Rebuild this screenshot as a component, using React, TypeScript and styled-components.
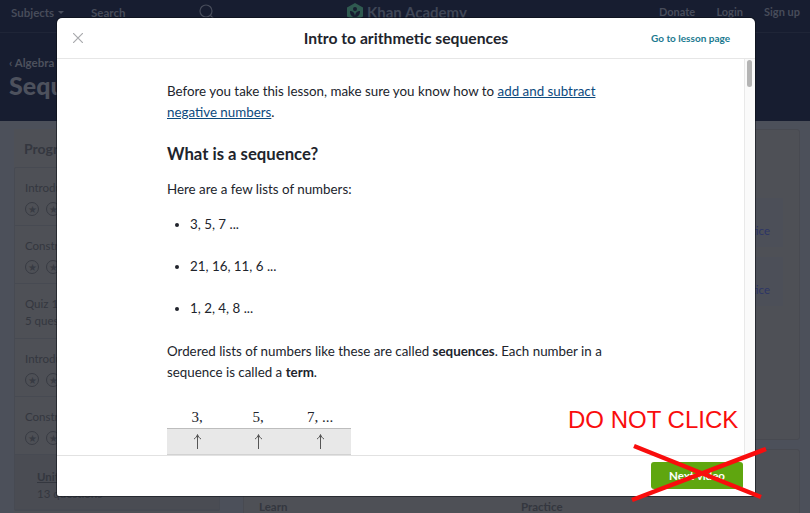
import React from 'react';
import styled, { createGlobalStyle } from 'styled-components';

const GlobalStyle = createGlobalStyle`
  html, body {
    margin: 0;
    padding: 0;
    width: 810px;
    height: 513px;
    overflow: hidden;
    background: #4c505a;
    font-family: Lato, "Open Sans", sans-serif;
  }
  * {
    box-sizing: border-box;
  }
`;

const Page = styled.div`
  position: relative;
  width: 810px;
  height: 513px;
  overflow: hidden;
  background: #4c505a;
`;

const TopBar = styled.div`
  height: 33px;
  background: #171d30;
  border-bottom: 1px solid #1f2537;
  display: flex;
  align-items: flex-start;
  padding: 4px 10px 0 11px;
  font-size: 11.5px;
  font-weight: 700;
  color: #474c5a;
`;

const BarLeft = styled.div`
  width: 336px;
  display: flex;
  align-items: center;
`;

const SubjectsMenu = styled.div`
  width: 80px;
  display: flex;
  align-items: center;
  gap: 4px;
`;

const Caret = styled.span`
  width: 0;
  height: 0;
  border-left: 3px solid transparent;
  border-right: 3px solid transparent;
  border-top: 3px solid #474c5a;
`;

const SearchBox = styled.div`
  width: 124px;
  display: flex;
  justify-content: space-between;
  align-items: center;
`;

const Logo = styled.div`
  display: flex;
  align-items: center;
  gap: 4px;
  width: 312px;
  font-size: 15px;
  margin-top: -1px;
  color: #3f4656;
`;

const BarLinks = styled.div`
  flex: 1;
  display: flex;
  justify-content: space-between;
  font-size: 11px;
  line-height: 16px;
`;

const Hero = styled.div`
  height: 88px;
  background: #171d30;
  padding: 23px 0 0 9px;
  color: #4d515d;
  font-weight: 700;
`;

const Crumb = styled.div`
  font-size: 11.5px;
  line-height: 14px;
`;

const HeroTitle = styled.div`
  font-size: 25px;
  font-weight: 900;
  line-height: 30px;
`;

const Body = styled.div`
  display: flex;
  padding: 8px 10px 0 14px;
  gap: 23px;
`;

const Sidebar = styled.div`
  width: 206px;
  flex-shrink: 0;
  padding-top: 10px;
  background: #4e5056;
`;

const SideTitle = styled.div`
  font-size: 14px;
  font-weight: 700;
  color: #34373f;
  padding-left: 10px;
  line-height: 20px;
  margin-bottom: 8px;
`;

const SideList = styled.div`
  border: 1px solid #474a52;
  border-radius: 2px;
`;

const SideRow = styled.div<{ $tall?: boolean; $shaded?: boolean }>`
  height: ${(p) => (p.$tall ? 55 : 58)}px;
  padding: ${(p) => (p.$shaded ? '14px 0 0 22px' : '12px 0 0 10px')};
  border-bottom: 1px solid #474a52;
  background: ${(p) => (p.$shaded ? '#4a4c53' : 'transparent')};
  font-size: 11.5px;
  line-height: 16px;
  color: #34373f;
`;

const StarRow = styled.div`
  display: flex;
  gap: 7px;
  margin-top: 6px;
`;

const Star = styled.div`
  width: 14px;
  height: 14px;
  border: 1px solid #383b43;
  border-radius: 50%;
  display: flex;
  align-items: center;
  justify-content: center;
  color: #383b43;
  font-size: 10px;
  line-height: 1;
`;

const RowDetail = styled.div`
  margin-top: 1px;
`;

const UnitLink = styled.span`
  font-weight: 700;
  text-decoration: underline;
`;

const MainColumn = styled.div`
  flex: 1;
  display: flex;
  flex-direction: column;
  gap: 9px;
`;

const Panel = styled.div`
  background: #4e5056;
  border: 1px solid #484a51;
  border-radius: 3px;
  height: 311px;
  padding: 68px 16px 0 0;
  display: flex;
  flex-direction: column;
  gap: 10px;
`;

const BottomPanel = styled(Panel)`
  height: 80px;
  padding: 49px 0 0 15px;
  flex-direction: row;
  gap: 230px;
  font-size: 11.5px;
  line-height: 16px;
  font-weight: 700;
  color: #34373f;
`;

const BottomLabel = styled.span`
  width: 32px;
  white-space: nowrap;
`;

const LessonCard = styled.div`
  height: 49px;
  background: #4c4f58;
  display: flex;
  align-items: flex-start;
  justify-content: flex-end;
  padding: 25px 13px 0 0;
  font-size: 11.5px;
  line-height: 16px;
  color: #2c3566;
`;

const Modal = styled.div`
  position: absolute;
  left: 57px;
  top: 18px;
  width: 698px;
  height: 478px;
  background: #fff;
  border-radius: 5px 5px 2px 2px;
  box-shadow: 0 0 0 1px rgba(10, 12, 20, 0.55);
  display: flex;
  flex-direction: column;
  overflow: hidden;
  color: #21242c;
`;

const ModalHeader = styled.div`
  height: 41px;
  flex-shrink: 0;
  border-bottom: 1px solid #e6e6e6;
  display: flex;
  align-items: center;
  justify-content: space-between;
  position: relative;
  padding: 0 25px 0 16px;
`;

const CloseIcon = styled.svg`
  width: 10px;
  height: 10px;
  stroke: #a9abae;
  stroke-width: 1.2;
  fill: none;
`;

const ModalTitle = styled.div`
  position: absolute;
  left: 0;
  right: 0;
  text-align: center;
  font-size: 15.7px;
  font-weight: 700;
  pointer-events: none;
`;

const LessonLink = styled.a`
  font-size: 10px;
  font-weight: 700;
  color: #1b7a90;
`;

const ModalScroll = styled.div`
  flex: 1;
  display: flex;
  overflow: hidden;
`;

const Content = styled.div`
  flex: 1;
  overflow: hidden;
  padding: 22px 0 0 110px;
  font-size: 13.35px;
  line-height: 21px;
`;

const Para = styled.p<{ $gap?: number }>`
  width: 450px;
  margin: 0 0 ${(p) => p.$gap ?? 14}px;
`;

const TextLink = styled.a`
  color: #0c4a7e;
  text-decoration: underline;
`;

const SectionTitle = styled.h2`
  font-size: 16.7px;
  font-weight: 700;
  line-height: 24px;
  margin: 0 0 13px;
`;

const NumberList = styled.ul`
  margin: 0 0 1px;
  padding: 0 0 0 23px;
`;

const NumberItem = styled.li`
  height: 42px;
`;

const MathTable = styled.div`
  width: 184px;
  margin-top: 25px;
  font-family: "Liberation Serif", serif;
`;

const MathRow = styled.div`
  display: grid;
  grid-template-columns: 60px 62px 62px;
  justify-items: center;
  height: 20px;
  line-height: 18px;
  font-size: 15px;
`;

const ArrowRow = styled(MathRow)`
  height: 27px;
  align-items: center;
  background: #e8e8e8;
  border-top: 1px solid #bdbdbd;
  border-bottom: 1px solid #d2d2d2;
`;

const ArrowIcon = styled.svg`
  width: 9px;
  height: 15px;
  stroke: #555;
  stroke-width: 1;
  fill: none;
`;

const ScrollTrack = styled.div`
  width: 11px;
  flex-shrink: 0;
  background: #fafafa;
  border-left: 1px solid #e9e9e9;
  padding: 1px 3px 0 2px;
`;

const ScrollThumb = styled.div`
  height: 27px;
  background: #b4b4b4;
  border-radius: 3px;
`;

const ModalFooter = styled.div`
  height: 41px;
  flex-shrink: 0;
  border-top: 1px solid #e2e2e2;
  display: flex;
  align-items: flex-start;
  justify-content: flex-end;
  padding: 6px 12px 0 0;
`;

const NextButton = styled.button`
  width: 92px;
  height: 27px;
  border: none;
  border-radius: 3px;
  background: #5fa60f;
  color: #fff;
  font-family: inherit;
  font-size: 11.5px;
  font-weight: 700;
  padding: 0;
`;

const Warning = styled.div`
  position: absolute;
  left: 568px;
  top: 405px;
  font-family: "Liberation Sans", Arial, sans-serif;
  font-size: 24px;
  line-height: 30px;
  color: #f90d0d;
  white-space: nowrap;
`;

const CrossOut = styled.svg`
  position: absolute;
  left: 0;
  top: 0;
  width: 810px;
  height: 513px;
  pointer-events: none;
`;

const rows = [
  { title: 'Introduction', stars: true },
  { title: 'Constructing', stars: true },
  { title: 'Quiz 1', detail: '5 questions', tall: true },
  { title: 'Introduction', stars: true },
  { title: 'Constructing', stars: true },
];

function Stars () {
  return (
    <StarRow>
      <Star>★</Star>
      <Star>★</Star>
    </StarRow>
  );
}

function UpArrow () {
  return (
    <ArrowIcon viewBox="0 0 9 15">
      <path d="M4.500 15V1M1 5C2.800 4 3.800 2.500 4.500 0.500C5.200 2.500 6.200 4 8 5" />
    </ArrowIcon>
  );
}

export default function App () {
  return (
    <Page>
      <GlobalStyle />
      <TopBar>
        <BarLeft>
          <SubjectsMenu>Subjects<Caret /></SubjectsMenu>
          <SearchBox>
            Search
            <svg width="16" height="16" viewBox="0 0 16 16" fill="none" stroke="#474c5a" strokeWidth="1.2">
              <circle cx="7" cy="7" r="6" />
              <path d="M11.500 11.500L15 15" />
            </svg>
          </SearchBox>
        </BarLeft>
        <Logo>
          <svg width="16" height="18" viewBox="0 0 16 18">
            <path d="M8 0L16 4.500V13.500L8 18L0 13.500V4.500Z" fill="#2f5a50" />
            <circle cx="8" cy="6" r="2" fill="#171d30" />
            <path d="M3 8C6 8 8 10 8 14C5 14 3 12 3 8ZM13 8C10 8 8 10 8 14C11 14 13 12 13 8Z" fill="#171d30" />
          </svg>
          Khan Academy
        </Logo>
        <BarLinks>
          <span>Donate</span>
          <span>Login</span>
          <span>Sign up</span>
        </BarLinks>
      </TopBar>
      <Hero>
        <Crumb>‹ Algebra</Crumb>
        <HeroTitle>Sequences</HeroTitle>
      </Hero>
      <Body>
        <Sidebar>
          <SideTitle>Progress</SideTitle>
          <SideList>
            {rows.map((row, i) => (
              <SideRow key={i} $tall={row.tall}>
                {row.title}
                {row.stars ? <Stars /> : <RowDetail>{row.detail}</RowDetail>}
              </SideRow>
            ))}
            <SideRow $shaded $tall>
              <UnitLink>Unit test</UnitLink>
              <RowDetail>13 questions</RowDetail>
            </SideRow>
          </SideList>
        </Sidebar>
        <MainColumn>
          <Panel>
            <LessonCard>Practice</LessonCard>
            <LessonCard>Practice</LessonCard>
          </Panel>
          <BottomPanel>
            <BottomLabel>Learn</BottomLabel>
            <BottomLabel>Practice</BottomLabel>
          </BottomPanel>
        </MainColumn>
      </Body>

      <Modal>
        <ModalHeader>
          <CloseIcon viewBox="0 0 10 10">
            <path d="M0 0L10 10M10 0L0 10" />
          </CloseIcon>
          <ModalTitle>Intro to arithmetic sequences</ModalTitle>
          <LessonLink>Go to lesson page</LessonLink>
        </ModalHeader>
        <ModalScroll>
          <Content>
            <Para $gap={19}>
              Before you take this lesson, make sure you know how to{' '}
              <TextLink>add and subtract negative numbers</TextLink>.
            </Para>
            <SectionTitle>What is a sequence?</SectionTitle>
            <Para>Here are a few lists of numbers:</Para>
            <NumberList>
              <NumberItem>3, 5, 7 ...</NumberItem>
              <NumberItem>21, 16, 11, 6 ...</NumberItem>
              <NumberItem>1, 2, 4, 8 ...</NumberItem>
            </NumberList>
            <Para>
              Ordered lists of numbers like these are called <b>sequences</b>. Each number in a
              sequence is called a <b>term</b>.
            </Para>
            <MathTable>
              <MathRow>
                <span>3,</span>
                <span>5,</span>
                <span>7, ...</span>
              </MathRow>
              <ArrowRow>
                <UpArrow />
                <UpArrow />
                <UpArrow />
              </ArrowRow>
            </MathTable>
          </Content>
          <ScrollTrack>
            <ScrollThumb />
          </ScrollTrack>
        </ModalScroll>
        <ModalFooter>
          <NextButton>Next video</NextButton>
        </ModalFooter>
      </Modal>

      <Warning>DO NOT CLICK</Warning>
      <CrossOut viewBox="0 0 810 513">
        <path d="M634 446L761 497M766 449L632 500" stroke="#f90d0d" strokeWidth="4.500" fill="none" />
      </CrossOut>
    </Page>
  );
}
